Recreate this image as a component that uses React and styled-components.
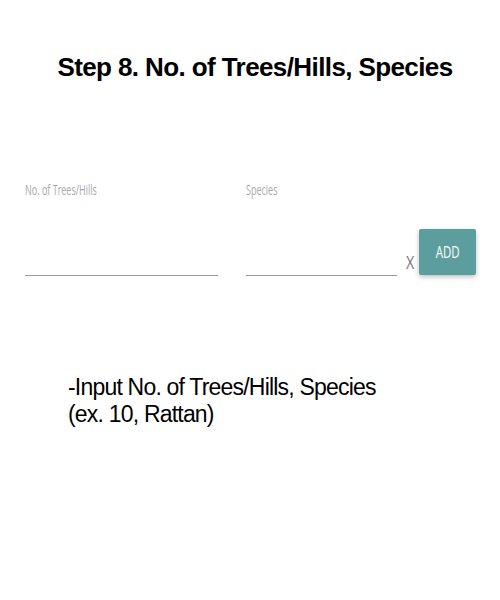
import React from "react";
import styled, { createGlobalStyle } from "styled-components";

const GlobalStyle = createGlobalStyle`
  body {
    margin: 0;
    background: #ffffff;
    font-family: "Liberation Sans", Arial, sans-serif;
  }
`;

const Page = styled.div`
  width: 500px;
  height: 600px;
  display: flex;
  flex-direction: column;
  overflow: hidden;
`;

const Title = styled.h1`
  margin: 50px 0 0;
  padding-left: 10px;
  text-align: center;
  font-size: 26px;
  font-weight: bold;
  letter-spacing: -0.6px;
  color: #000;
  line-height: 34px;
`;

const Form = styled.div`
  display: flex;
  align-items: flex-end;
  margin: 96px 0 0 25px;
`;

const Field = styled.div`
  width: ${props => props.width}px;
  margin-right: ${props => props.gap || 0}px;
  display: flex;
  flex-direction: column;
`;

const Label = styled.label`
  font-family: "Open Sans", sans-serif;
  font-size: 15px;
  color: #a8a8a8;
  transform: scaleX(0.6);
  transform-origin: left center;
  white-space: nowrap;
  line-height: 18px;
`;

const Input = styled.input`
  margin-top: 53px;
  border: none;
  border-bottom: 1.5px solid #9a9a9a;
  outline: none;
  height: 24px;
  padding: 0;
  background: transparent;
`;

const Clear = styled.span`
  font-family: "Open Sans", sans-serif;
  font-size: 18px;
  color: #777;
  transform: scaleX(0.8);
  margin: 0 4px 4px 8px;
  line-height: 20px;
`;

const AddButton = styled.button`
  width: 57px;
  height: 46px;
  margin-bottom: 1px;
  border: none;
  border-radius: 2px;
  background: #5c9e9e;
  color: #fff;
  font-family: "Open Sans", sans-serif;
  font-size: 16px;
  box-shadow: 0 2px 5px rgba(0, 0, 0, 0.25);
  padding: 0;
  span {
    display: inline-block;
    transform: scaleX(0.72);
  }
`;

const Note = styled.p`
  margin: 98px 0 0 68px;
  font-size: 23px;
  line-height: 27px;
  color: #000;
  letter-spacing: -0.8px;
`;

export default function App() {
  return (
    <Page>
      <GlobalStyle />
      <Title>Step 8. No. of Trees/Hills, Species</Title>
      <Form>
        <Field width={193} gap={28}>
          <Label>No. of Trees/Hills</Label>
          <Input />
        </Field>
        <Field width={151}>
          <Label>Species</Label>
          <Input />
        </Field>
        <Clear>X</Clear>
        <AddButton>
          <span>ADD</span>
        </AddButton>
      </Form>
      <Note>
        -Input No. of Trees/Hills, Species
        <br />
        (ex. 10, Rattan)
      </Note>
    </Page>
  );
}
